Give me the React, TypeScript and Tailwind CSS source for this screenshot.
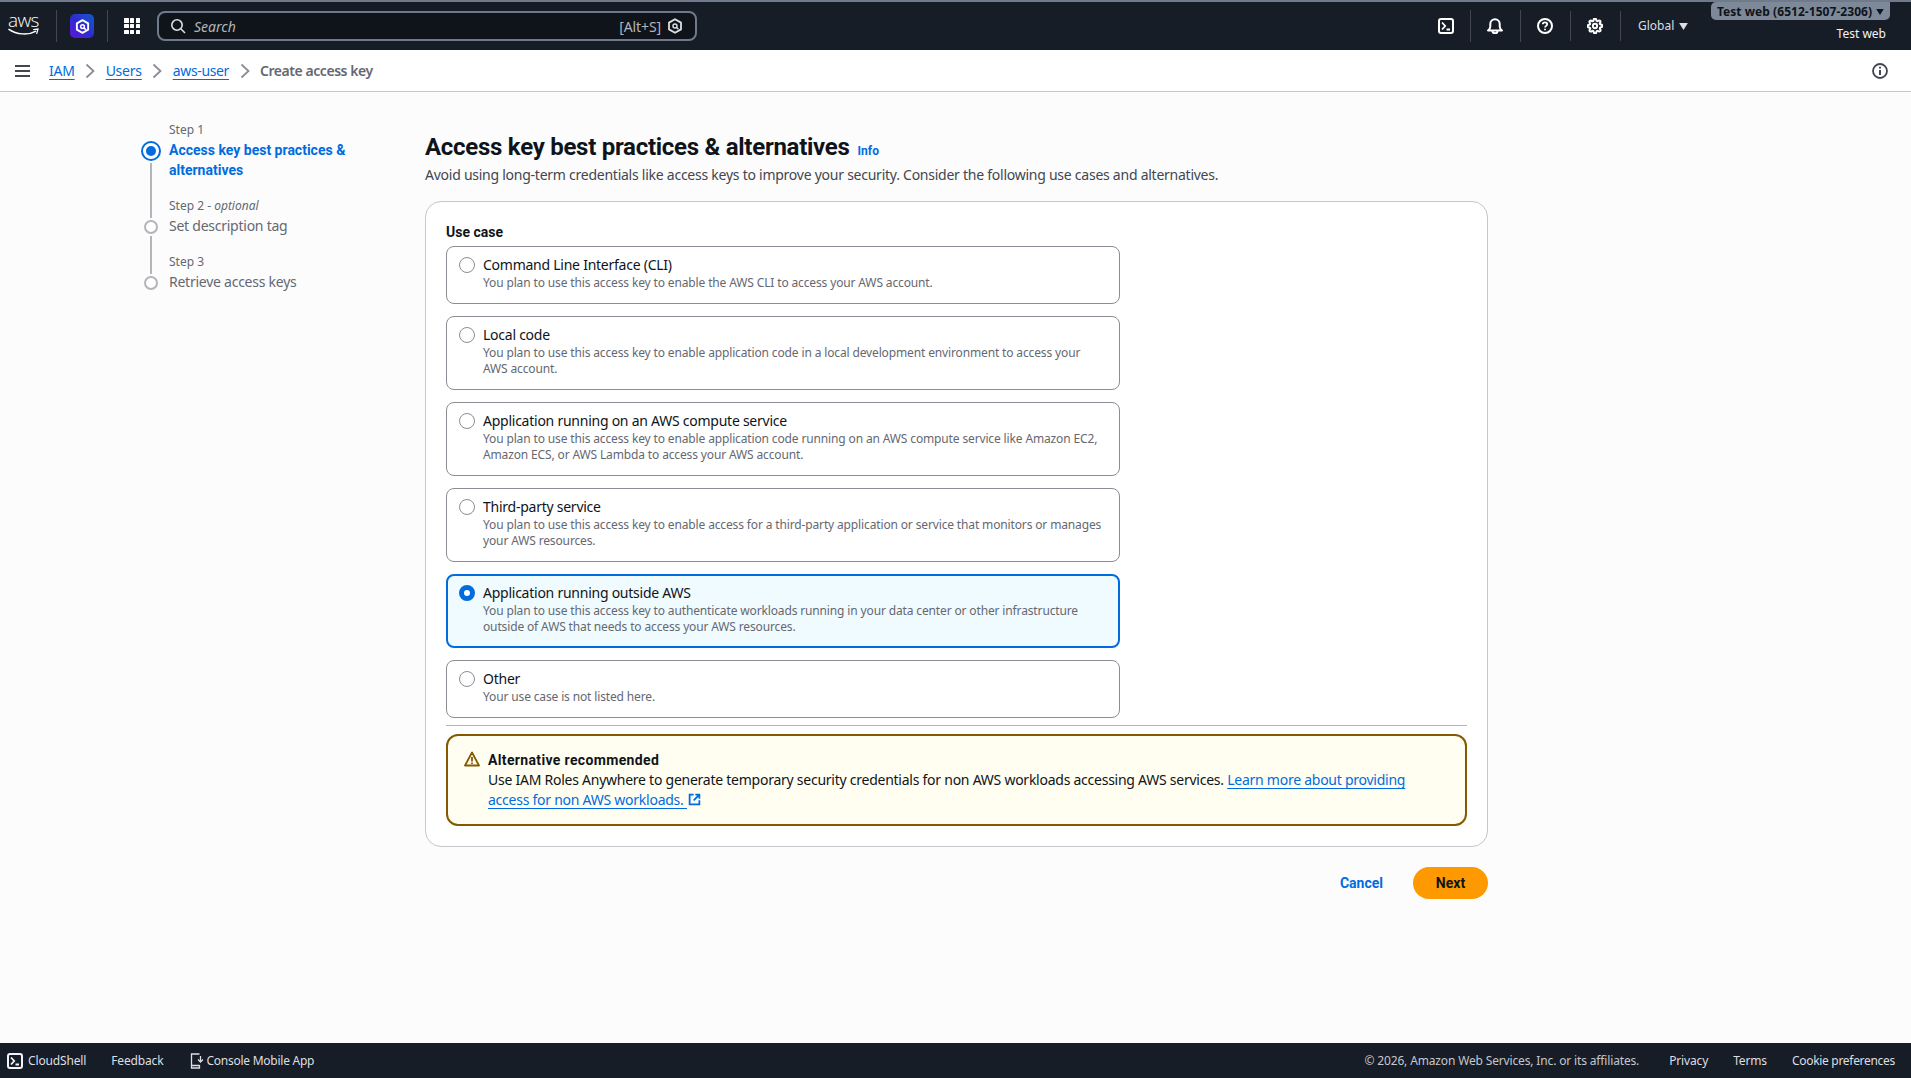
import React from "react";

const font = "font-['Noto_Sans',sans-serif]";
const bold = "font-['Roboto',sans-serif] font-bold tracking-normal";

function TermIcon({ cls }: { cls?: string }) {
  return (
    <svg viewBox="0 0 16 16" className={cls} fill="none" stroke="currentColor" strokeWidth="2">
      <rect x="1" y="1" width="14" height="14" rx="2" />
      <path d="M4 4.500 7.200 8 4 11.500M8.500 11.500H12" strokeWidth="1.800" />
    </svg>
  );
}

function HexQ({ cls, sw = 2 }: { cls?: string; sw?: number }) {
  return (
    <svg viewBox="0 0 16 16" className={cls} fill="none" stroke="currentColor" strokeWidth={sw}>
      <path d="M8 1.200 14 4.600V11.400L8 14.800 2 11.400V4.600Z" strokeLinejoin="round" />
      <circle cx="8" cy="8" r="2" strokeWidth={sw * 0.8} />
      <path d="M9.500 9.500 11.500 11.300" strokeWidth={sw * 0.8} />
    </svg>
  );
}

function Radio({ checked }: { checked?: boolean }) {
  return (
    <span
      className={
        checked
          ? "w-4 h-4 rounded-full shrink-0 mt-[2px] border-[5px] border-[#006ce0] bg-white"
          : "w-4 h-4 rounded-full shrink-0 mt-[2px] border border-[#8c8c94] bg-white"
      }
    />
  );
}

function Tile({ title, desc, checked }: { title: string; desc: React.ReactNode; checked?: boolean }) {
  return (
    <div
      className={
        checked
          ? "flex gap-2 rounded-lg border-2 border-[#006ce0] bg-[#f0fbff] pl-[11px] pr-[11px] pt-[7px] pb-[11px]"
          : "flex gap-2 rounded-lg border border-[#8c8c94] bg-white pl-3 pr-3 pt-2 pb-3"
      }
    >
      <Radio checked={checked} />
      <div>
        <div className="text-[14px] leading-5 text-[#0f141a]">{title}</div>
        <div className="text-[12px] leading-4 tracking-[-0.14px] text-[#656871]">{desc}</div>
      </div>
    </div>
  );
}

function Sep({ cls }: { cls: string }) {
  return <span className={"w-px bg-[#424650] shrink-0 " + cls} />;
}

function Chevron() {
  return (
    <svg viewBox="0 0 16 16" className="w-4 h-4 text-[#8c8c94] shrink-0" fill="none" stroke="currentColor" strokeWidth="1.800">
      <path d="M4.500 1.500 11.500 8 4.500 14.500" />
    </svg>
  );
}

const steps = [
  { label: "Step 1", title: "Access key best practices & alternatives", active: true },
  { label: "Step 2", opt: true, title: "Set description tag" },
  { label: "Step 3", title: "Retrieve access keys" },
];

export default function App() {
  return (
    <div className={font + " min-h-screen flex flex-col bg-[#fcfcfc] text-[14px] text-[#0f141a] tracking-[-0.25px]"}>
      {/* top nav */}
      <header className="h-[50px] bg-[#161d26] border-t-2 border-[#6f7b8a] flex items-center shrink-0 tracking-normal">
        <div className="w-[56px] flex flex-col items-start pl-[8px] text-white shrink-0">
          <span className="font-['Open_Sans',sans-serif] font-light text-[19px] leading-[14px] tracking-[-0.6px] -mt-[3px]">aws</span>
          <svg viewBox="0 0 32 8" className="w-[31px] h-[8px] mt-[1px]" fill="none" stroke="currentColor" strokeWidth="1.500">
            <path d="M0.500 1C9 7 21 7.500 29 3" />
            <path d="M26 1.500 31 1 29.500 6" strokeWidth="1.300" />
          </svg>
        </div>
        <Sep cls="h-[32px]" />
        <div className="w-[50px] flex justify-center shrink-0">
          <div className="w-6 h-6 rounded-[5px] bg-linear-to-tr from-[#5a12d8] via-[#2d2ad0] to-[#0a58c8] flex items-center justify-center text-white">
            <HexQ cls="w-[15px] h-[15px]" sw={2} />
          </div>
        </div>
        <Sep cls="h-[32px]" />
        <div className="w-[49px] pr-[1px] flex justify-center shrink-0">
          <div className="grid grid-cols-3 gap-[1.250px]">
            {Array.from({ length: 9 }).map((_, i) => (
              <span key={i} className="w-[4.500px] h-[4.500px] bg-white rounded-[0.5px]" />
            ))}
          </div>
        </div>
        <div className="w-[540px] h-[30px] shrink-0 rounded-lg border-2 border-[#6f7b8a] bg-[#0f141a] flex items-center pl-[11px] pr-[12px] text-[#b4b4bb]">
          <svg viewBox="0 0 16 16" className="w-4 h-4 text-[#dedee3]" fill="none" stroke="currentColor" strokeWidth="1.600">
            <circle cx="7" cy="7" r="5.200" />
            <path d="M11 11l4 4" />
          </svg>
          <span className="ml-[8px] italic text-[14px] text-[#b4b4bb]">Search</span>
          <span className="ml-auto text-[14px] tracking-[-0.1px] text-[#b4b4bb]">[Alt+S]</span>
          <HexQ cls="w-4 h-4 ml-[6px] text-[#dedee3]" sw={1.800} />
        </div>
        <div className="flex-1" />
        <div className="flex items-center text-white shrink-0 w-[292px]">
          <div className="w-[51px] pl-[3px] flex justify-center"><TermIcon cls="w-4 h-4" /></div>
          <Sep cls="h-[32px]" />
          <div className="w-[49px] pr-[2px] flex justify-center">
            <svg viewBox="0 0 16 16" className="w-4 h-4" fill="none" stroke="currentColor" strokeWidth="2">
              <path d="M1 12.500h14c-1.500-1-2.300-2-2.300-4V6a4.700 4.700 0 0 0-9.400 0V8.500c0 2-.8 3-2.300 4Z" strokeLinejoin="round" />
              <path d="M5.500 13c0 1.500 1 2.300 2.500 2.300s2.500-.8 2.500-2.300" />
            </svg>
          </div>
          <Sep cls="h-[32px]" />
          <div className="w-[49px] pr-[2px] flex justify-center">
            <svg viewBox="0 0 16 16" className="w-4 h-4" fill="none" stroke="currentColor" strokeWidth="2">
              <circle cx="8" cy="8" r="7" />
              <path d="M5.800 6.200C5.800 5 6.800 4.300 8 4.300s2.200.8 2.200 1.900c0 1.600-2.200 1.700-2.200 3.300" strokeWidth="1.800" />
              <path d="M8 10.800v1.500" strokeWidth="1.800" />
            </svg>
          </div>
          <Sep cls="h-[30px]" />
          <div className="w-[49px] pr-[2px] flex justify-center">
            <svg viewBox="0 0 24 24" className="w-4 h-4" fill="none" stroke="currentColor" strokeWidth="3">
              <circle cx="12" cy="12" r="3.200" />
              <path d="M19.400 15a1.650 1.650 0 0 0 .33 1.820l.06.06a2 2 0 1 1-2.830 2.830l-.06-.06a1.650 1.650 0 0 0-2.820 1.170V21a2 2 0 1 1-4 0v-.09A1.650 1.650 0 0 0 7.270 19.740l-.06.06a2 2 0 1 1-2.830-2.830l.06-.06a1.650 1.650 0 0 0-1.170-2.820H3a2 2 0 1 1 0-4h.09A1.650 1.650 0 0 0 4.260 7.270l-.06-.06a2 2 0 1 1 2.830-2.830l.06.06a1.650 1.650 0 0 0 2.820-1.170V3a2 2 0 1 1 4 0v.09a1.650 1.650 0 0 0 2.820 1.170l.06-.06a2 2 0 1 1 2.830 2.830l-.06.06a1.650 1.650 0 0 0 1.170 2.820H21a2 2 0 1 1 0 4h-.09a1.650 1.650 0 0 0-1.510 1Z" />
            </svg>
          </div>
          <Sep cls="h-[30px]" />
          <div className="pl-[17px] flex items-center gap-[5px] text-[12px] leading-4 text-[#dedee3]">
            Global
            <svg viewBox="0 0 10 8" className="w-[9px] h-[7px]" fill="currentColor"><path d="M0 0h10L5 8Z" /></svg>
          </div>
        </div>
        <div className="w-[200px] shrink-0 self-stretch flex flex-col items-end pr-[21px]">
          <div className="h-[18px] pt-[1px] w-[179px] bg-[#7d8998] rounded-b-[5px] rounded-tl-[5px] flex items-center justify-center gap-[4px] text-[12px] font-bold tracking-[0.05px] text-[#0f141a] whitespace-nowrap">
            Test web (6512-1507-2306)
            <svg viewBox="0 0 10 8" className="w-[8px] h-[6px]" fill="currentColor"><path d="M0 0h10L5 8Z" /></svg>
          </div>
          <div className="mt-[6px] pr-[4px] text-[12px] leading-4 text-[#f3f3f7]">Test web</div>
        </div>
      </header>

      {/* breadcrumbs */}
      <div className="h-[42px] bg-white border-b border-[#c6c6cd] flex items-center shrink-0 pl-[15px] pr-[23px]">
        <svg viewBox="0 0 15 12" className="w-[15px] h-[12px] text-[#424650]" fill="currentColor">
          <rect y="0" width="15" height="2" /><rect y="5" width="15" height="2" /><rect y="10" width="15" height="2" />
        </svg>
        <div className="ml-[19px] flex items-center gap-[7.500px] text-[14px] leading-5">
          <a className="text-[#006ce0] underline underline-offset-[3px]">IAM</a>
          <Chevron />
          <a className="text-[#006ce0] underline underline-offset-[3px]">Users</a>
          <Chevron />
          <a className="text-[#006ce0] tracking-[-0.35px] underline underline-offset-[3px]">aws-user</a>
          <Chevron />
          <span className="font-semibold tracking-[-0.45px] text-[#656871]">Create access key</span>
        </div>
        <svg viewBox="0 0 16 16" className="ml-auto w-4 h-4 text-[#424650]" fill="none" stroke="currentColor" strokeWidth="1.800">
          <circle cx="8" cy="8" r="7" />
          <path d="M8 7v5M8 3.800v1.800" strokeWidth="2" />
        </svg>
      </div>

      {/* page */}
      <main className="flex-1 flex">
        <nav className="w-[425px] shrink-0 pl-[141px] pt-[30px]">
          {steps.map((s, i) => (
            <div key={s.label} className="flex gap-2">
              <div className="w-5 flex flex-col items-center shrink-0 self-stretch">
                {i === 0 ? (
                  <span className="mt-[19px] w-5 h-5 rounded-full border-2 border-[#006ce0] bg-white flex items-center justify-center">
                    <span className="w-[10px] h-[10px] rounded-full bg-[#006ce0]" />
                  </span>
                ) : (
                  <>
                    <span className="w-[2px] h-5 bg-[#b4b4bb]" />
                    <span className="mt-[2px] w-[14px] h-[14px] rounded-full border-2 border-[#b4b4bb] bg-white" />
                  </>
                )}
                {i < 2 && <span className="mt-[2px] w-[2px] flex-1 bg-[#b4b4bb]" />}
              </div>
              <div className="w-[200px] pb-[18px]">
                <div className="text-[12px] leading-4 tracking-normal text-[#656871]">
                  {s.label}
                  {s.opt && <> - <i>optional</i></>}
                </div>
                <div className={s.active ? "mt-[2px] leading-5 text-[#006ce0] " + bold : "mt-[2px] leading-5 text-[#656871]"}>
                  {s.title}
                </div>
              </div>
            </div>
          ))}
        </nav>

        <section className="w-[1063px] shrink-0 pt-[40px]">
          <div className="flex items-baseline gap-2">
            <h1 className="font-['Roboto',sans-serif] font-bold tracking-[-0.27px] text-[24px] leading-[30px] text-[#0f141a]">Access key best practices &amp; alternatives</h1>
            <a className={"text-[12px] text-[#006ce0] " + bold}>Info</a>
          </div>
          <p className="mt-[3px] leading-5 text-[#424650]">
            Avoid using long-term credentials like access keys to improve your security. Consider the following use cases and alternatives.
          </p>

          <div className="mt-[16px] rounded-2xl border border-[#c6c6cd] bg-white px-5 pt-[20px] pb-5">
            <div className={"leading-5 mb-[4px] " + bold}>Use case</div>
            <div className="w-[674px] flex flex-col gap-3">
              <Tile title="Command Line Interface (CLI)" desc="You plan to use this access key to enable the AWS CLI to access your AWS account." />
              <Tile title="Local code" desc="You plan to use this access key to enable application code in a local development environment to access your AWS account." />
              <Tile title="Application running on an AWS compute service" desc="You plan to use this access key to enable application code running on an AWS compute service like Amazon EC2, Amazon ECS, or AWS Lambda to access your AWS account." />
              <Tile title="Third-party service" desc="You plan to use this access key to enable access for a third-party application or service that monitors or manages your AWS resources." />
              <Tile checked title="Application running outside AWS" desc="You plan to use this access key to authenticate workloads running in your data center or other infrastructure outside of AWS that needs to access your AWS resources." />
              <Tile title="Other" desc="Your use case is not listed here." />
            </div>
            <div className="mt-[7px] mb-2 h-px bg-[#b4b4bb]" />
            <div className="rounded-xl border-2 border-[#855900] bg-[#fffef0] pl-4 pr-[40px] py-[14px] flex gap-2">
              <svg viewBox="0 0 16 16" className="w-4 h-4 shrink-0 mt-[1px] text-[#855900]" fill="none" stroke="currentColor" strokeWidth="1.800">
                <path d="M8 1.500 1 14.500h14Z" strokeLinejoin="round" />
                <path d="M8 6v4.500M8 11.500v1.500" />
              </svg>
              <div className="leading-5">
                <div className="font-['Roboto',sans-serif] font-bold tracking-[0.35px]">Alternative recommended</div>
                <div className="text-[#0f141a]">
                  Use IAM Roles Anywhere to generate temporary security credentials for non AWS workloads accessing AWS services.{" "}
                  <a className="text-[#006ce0] underline underline-offset-[3px]">Learn more about providing access for non AWS workloads. </a>
                  <svg viewBox="0 0 16 16" className="inline-block w-[13px] h-[13px] ml-[1px] align-[-1px] text-[#006ce0]" fill="none" stroke="currentColor" strokeWidth="2.200">
                    <path d="M7 2H2v12h12V9M9 2h5v5M14 2 7 9" />
                  </svg>
                </div>
              </div>
            </div>
          </div>

          <div className="mt-5 flex items-center justify-end gap-[30px]">
            <a className={"text-[#006ce0] " + bold}>Cancel</a>
            <button className={"w-[75px] h-8 rounded-full bg-[#ff9900] text-[#0f141a] " + bold}>Next</button>
          </div>
        </section>
      </main>

      {/* footer */}
      <footer className="h-[35px] bg-[#161d26] shrink-0 flex items-center pl-[7px] pr-4 text-[12px] tracking-[-0.15px] text-[#dedee3]">
        <TermIcon cls="w-4 h-4 text-[#f3f3f7]" />
        <span className="ml-[5px]">CloudShell</span>
        <span className="ml-[25px]">Feedback</span>
        <svg viewBox="0 0 14 16" className="ml-[27px] w-[14px] h-4" fill="none" stroke="currentColor" strokeWidth="1.300">
          <path d="M9.500 1H1.500v14h8v-3M1.500 12.500h8" />
          <path d="M10.500 3v5.500M8 6.500l2.500 2.500L13 6.500" />
        </svg>
        <span className="ml-[2px] tracking-[-0.25px]">Console Mobile App</span>
        <span className="ml-auto text-[#c6c6cd]">© 2026, Amazon Web Services, Inc. or its affiliates.</span>
        <span className="ml-[30px]">Privacy</span>
        <span className="ml-[25px]">Terms</span>
        <span className="ml-[25px] tracking-[-0.3px]">Cookie preferences</span>
      </footer>
    </div>
  );
}
